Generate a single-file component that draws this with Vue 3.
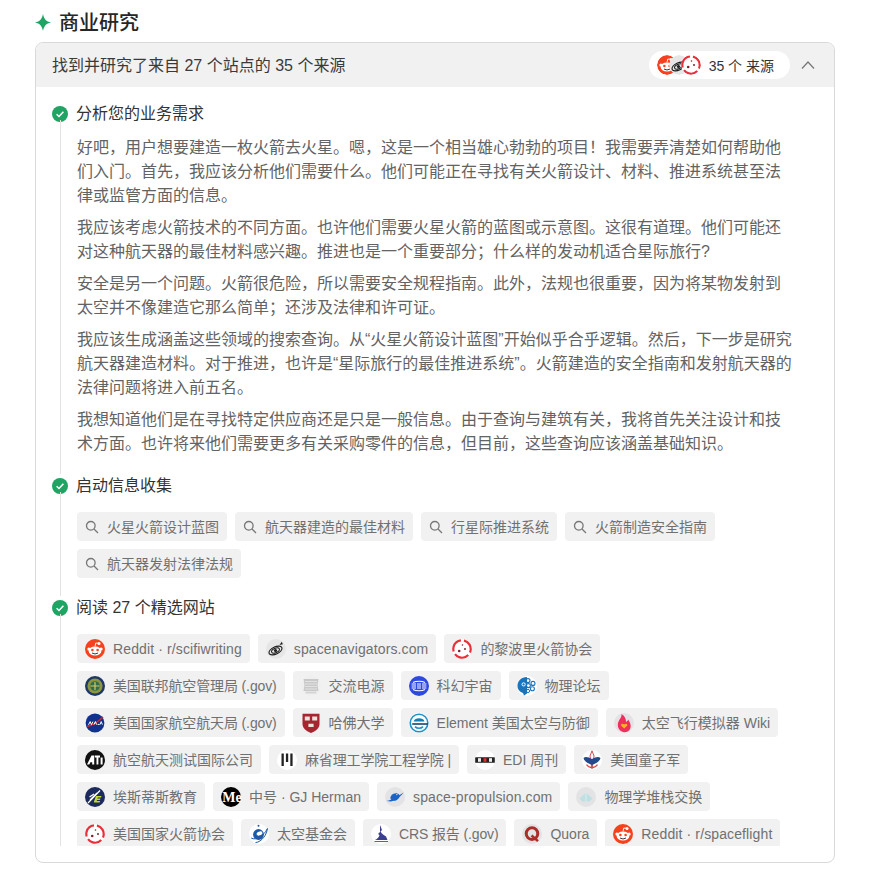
<script setup>
const paragraphs = [
  '好吧，用户想要建造一枚火箭去火星。嗯，这是一个相当雄心勃勃的项目！我需要弄清楚如何帮助他们入门。首先，我应该分析他们需要什么。他们可能正在寻找有关火箭设计、材料、推进系统甚至法律或监管方面的信息。',
  '我应该考虑火箭技术的不同方面。也许他们需要火星火箭的蓝图或示意图。这很有道理。他们可能还对这种航天器的最佳材料感兴趣。推进也是一个重要部分；什么样的发动机适合星际旅行?',
  '安全是另一个问题。火箭很危险，所以需要安全规程指南。此外，法规也很重要，因为将某物发射到太空并不像建造它那么简单；还涉及法律和许可证。',
  '我应该生成涵盖这些领域的搜索查询。从“火星火箭设计蓝图”开始似乎合乎逻辑。然后，下一步是研究航天器建造材料。对于推进，也许是“星际旅行的最佳推进系统”。火箭建造的安全指南和发射航天器的法律问题将进入前五名。',
  '我想知道他们是在寻找特定供应商还是只是一般信息。由于查询与建筑有关，我将首先关注设计和技术方面。也许将来他们需要更多有关采购零件的信息，但目前，这些查询应该涵盖基础知识。'
]

const queries = ['火星火箭设计蓝图', '航天器建造的最佳材料', '行星际推进系统', '火箭制造安全指南', '航天器发射法律法规']

// kind only nudges text width: latin names run a bit wider, ".gov" ones a bit narrower
const sources = [
  { name: 'Reddit · r/scifiwriting', icon: 'reddit', kind: 'latin' },
  { name: 'spacenavigators.com', icon: 'galaxy', kind: 'latin' },
  { name: '的黎波里火箭协会', icon: 'tripoli' },
  { name: '美国联邦航空管理局 (.gov)', icon: 'faa', kind: 'gov' },
  { name: '交流电源', icon: 'ac' },
  { name: '科幻宇宙', icon: 'scifi' },
  { name: '物理论坛', icon: 'physics' },
  { name: '美国国家航空航天局 (.gov)', icon: 'nasa', kind: 'gov' },
  { name: '哈佛大学', icon: 'harvard' },
  { name: 'Element 美国太空与防御', icon: 'element' },
  { name: '太空飞行模拟器 Wiki', icon: 'flame' },
  { name: '航空航天测试国际公司', icon: 'ati' },
  { name: '麻省理工学院工程学院 |', icon: 'mit', kind: 'gov' },
  { name: 'EDI 周刊', icon: 'edi' },
  { name: '美国童子军', icon: 'scouts' },
  { name: '埃斯蒂斯教育', icon: 'estes' },
  { name: '中号 · GJ Herman', icon: 'medium' },
  { name: 'space-propulsion.com', icon: 'propulsion', kind: 'latin' },
  { name: '物理学堆栈交换', icon: 'stack' },
  { name: '美国国家火箭协会', icon: 'tripoli' },
  { name: '太空基金会', icon: 'foundation' },
  { name: 'CRS 报告 (.gov)', icon: 'crs', kind: 'gov' },
  { name: 'Quora', icon: 'quora' },
  { name: 'Reddit · r/spaceflight', icon: 'reddit', kind: 'latin' }
]
</script>

<template>
  <div class="page">
    <h2 class="title">
      <svg class="spark" viewBox="0 0 16 17"><path d="M8 0 C9 5 11 7.5 16 8.5 C11 9.5 9 12 8 17 C7 12 5 9.5 0 8.5 C5 7.5 7 5 8 0Z" /></svg>
      商业研究
    </h2>

    <div class="card">
      <div class="card-head">
        <span class="head-text">找到并研究了来自 27 个站点的 35 个来源</span>
        <div class="count-pill">
          <div class="stack">
            <svg class="stack-icon" viewBox="0 0 20 20"><use href="#i-reddit" /></svg>
            <svg class="stack-icon" viewBox="0 0 20 20"><use href="#i-galaxy" /></svg>
            <svg class="stack-icon" viewBox="0 0 20 20"><use href="#i-tripoli" /></svg>
          </div>
          <span>35 个 来源</span>
        </div>
        <svg class="chevron" viewBox="0 0 16 16"><path d="M2 11.5 L8 5 L14 11.5" /></svg>
      </div>

      <div class="card-body">
        <div class="step">
          <div class="step-title"><span class="check"><svg viewBox="0 0 16 16"><path d="M4.6 8.2 L7 10.5 L11.4 5.8" /></svg></span>分析您的业务需求</div>
          <div class="step-content thoughts">
            <p v-for="p in paragraphs" :key="p">{{ p }}</p>
          </div>
        </div>

        <div class="step">
          <div class="step-title"><span class="check"><svg viewBox="0 0 16 16"><path d="M4.6 8.2 L7 10.5 L11.4 5.8" /></svg></span>启动信息收集</div>
          <div class="step-content chips">
            <div v-for="q in queries" :key="q" class="chip">
              <svg class="search" viewBox="0 0 14 14"><circle cx="5.8" cy="5.8" r="4.3" /><path d="M9 9 L13 13" /></svg>
              {{ q }}
            </div>
          </div>
        </div>

        <div class="step">
          <div class="step-title"><span class="check"><svg viewBox="0 0 16 16"><path d="M4.6 8.2 L7 10.5 L11.4 5.8" /></svg></span>阅读 27 个精选网站</div>
          <div class="step-content chips">
            <div v-for="s in sources" :key="s.name" class="chip" :class="s.kind">
              <svg class="favicon" viewBox="0 0 20 20"><use :href="'#i-' + s.icon" /></svg>
              {{ s.name }}
            </div>
          </div>
        </div>
      </div>
    </div>

    <svg class="defs" width="0" height="0">
      <defs>
        <symbol id="i-reddit" viewBox="0 0 20 20">
          <circle cx="10" cy="10" r="10" fill="#f5421c" />
          <ellipse cx="10" cy="12" rx="6.4" ry="4.6" fill="#fff" />
          <circle cx="3.9" cy="10" r="1.6" fill="#fff" />
          <circle cx="16.1" cy="10" r="1.6" fill="#fff" />
          <circle cx="14" cy="4.4" r="1.5" fill="#fff" />
          <path d="M10 7.5 L10.8 4 L14 4.4" fill="none" stroke="#fff" stroke-width=".9" />
          <circle cx="7.4" cy="11" r="1.3" fill="#f5421c" />
          <circle cx="12.6" cy="11" r="1.3" fill="#f5421c" />
          <path d="M7 14 Q10 16 13 14" fill="none" stroke="#222" stroke-width=".9" />
        </symbol>
        <symbol id="i-galaxy" viewBox="0 0 20 20">
          <circle cx="10" cy="10" r="10" fill="#e6e6e6" />
          <ellipse cx="9.5" cy="11.5" rx="7" ry="3.6" fill="none" stroke="#1c1c1c" stroke-width="1.1" transform="rotate(-25 9.5 11.5)" />
          <ellipse cx="9.5" cy="11.5" rx="4.2" ry="2.2" fill="none" stroke="#1c1c1c" stroke-width="1" transform="rotate(-25 9.5 11.5)" />
          <circle cx="9.5" cy="11.5" r="1.6" fill="#1c1c1c" />
          <path d="M13.5 6 L15.8 2.8 L16.8 5.2Z" fill="#1c1c1c" />
        </symbol>
        <symbol id="i-tripoli" viewBox="0 0 20 20">
          <circle cx="10" cy="10" r="10" fill="#fff" />
          <circle cx="10" cy="10" r="8.7" fill="none" stroke="#e8303a" stroke-width="2.2" stroke-dasharray="15 3" transform="rotate(-75 10 10)" />
          <circle cx="7.2" cy="12" r="1.3" fill="#7c2430" />
          <circle cx="13" cy="10" r="1" fill="#7c2430" />
          <circle cx="10.5" cy="6" r=".8" fill="#7c2430" />
        </symbol>
        <symbol id="i-faa" viewBox="0 0 20 20">
          <circle cx="10" cy="10" r="10" fill="#1d3766" />
          <circle cx="10" cy="10" r="7.6" fill="#8f9440" />
          <circle cx="10" cy="10" r="4.8" fill="#2f6d4e" />
          <path d="M5.5 10 H14.5 M10 6 V14" stroke="#d8c964" stroke-width="1.2" />
        </symbol>
        <symbol id="i-ac" viewBox="0 0 20 20">
          <circle cx="10" cy="10" r="10" fill="#efefef" />
          <path d="M2.5 3 H17.5 L16.5 9 L17.5 15 H2.5 L3.5 9Z" fill="#c9c9c9" />
          <path d="M4 5.5 H16 M4 8 H16 M4 10.5 H16 M4 13 H16" stroke="#e2e2e2" stroke-width="1" />
          <path d="M4.5 15.5 H15.5 V17.5 H4.5Z" fill="#d4d4d4" />
        </symbol>
        <symbol id="i-scifi" viewBox="0 0 20 20">
          <circle cx="10" cy="10" r="10" fill="#2d49e0" />
          <path d="M2.6 8 H7 M2.6 10 H7 M2.6 12 H7 M8 8 H12 M8 10 H12 M8 12 H12 M13 8 H17.4 M13 10 H17.4 M13 12 H17.4" stroke="#fff" stroke-width="1" />
          <path d="M4 6.5 C7 4.8 13 4.8 16 6.5 M4 13.5 C7 15.2 13 15.2 16 13.5" fill="none" stroke="#fff" stroke-width="1.1" />
        </symbol>
        <symbol id="i-physics" viewBox="0 0 20 20">
          <circle cx="10" cy="10" r="10" fill="#fff" />
          <path d="M10 1 C4 1 .5 5 .5 10 C.5 13.5 3 16.2 6 17 L7 19.5 L10 17.5Z" fill="#1b74ba" />
          <circle cx="11" cy="4.6" r="2" fill="none" stroke="#1b74ba" stroke-width="1.1" />
          <circle cx="16" cy="7.4" r="2" fill="none" stroke="#1b74ba" stroke-width="1.1" />
          <circle cx="15.4" cy="12.8" r="2" fill="none" stroke="#1b74ba" stroke-width="1.1" />
          <circle cx="11.4" cy="9.6" r="2" fill="none" stroke="#1b74ba" stroke-width="1.1" />
          <circle cx="11" cy="15" r="1.6" fill="none" stroke="#1b74ba" stroke-width="1" />
          <circle cx="6.6" cy="8.4" r="1.6" fill="none" stroke="#fff" stroke-width="1" />
        </symbol>
        <symbol id="i-nasa" viewBox="0 0 20 20">
          <circle cx="10" cy="10" r="9.4" fill="#10328c" />
          <path d="M2 13.5 C7 12.5 13 9 18 4" fill="none" stroke="#d8232a" stroke-width="1.6" />
          <path d="M3.5 11.8 L5.2 8.6 L6.4 11.6 L8 8.6 M9 11.6 L10.4 8.6 L11.6 11.6 M12.6 11.4 H14.6 M15 11.6 L16.2 8.6 L17.4 11.6" fill="none" stroke="#fff" stroke-width="1" />
        </symbol>
        <symbol id="i-harvard" viewBox="0 0 20 20">
          <circle cx="10" cy="10" r="10" fill="#efefef" />
          <path d="M1.5 .8 H18.5 V11 C18.5 15.5 14.5 18 10 20 C5.5 18 1.5 15.5 1.5 11Z" fill="#a5262f" />
          <path d="M3.8 3.4 H8.8 V7.4 H3.8Z M11.2 3.4 H16.2 V7.4 H11.2Z M7.4 10.8 H12.6 V14 H7.4Z" fill="#e9e4de" />
        </symbol>
        <symbol id="i-element" viewBox="0 0 20 20">
          <circle cx="10" cy="10" r="10" fill="#fff" />
          <circle cx="10" cy="10" r="8.8" fill="none" stroke="#1f93c9" stroke-width="1.6" />
          <path d="M4.5 8.6 C5.5 4.4 14.5 4 15.5 8.6Z" fill="#0f7fb4" />
          <path d="M3.2 10.2 H18.8 V11.8 H3.2Z" fill="#14456a" />
          <path d="M6 13.6 C8 15.8 12 15.8 14 13.6" fill="none" stroke="#1f93c9" stroke-width="1.6" />
        </symbol>
        <symbol id="i-flame" viewBox="0 0 20 20">
          <circle cx="10" cy="10" r="10" fill="#e3e3e5" />
          <path d="M7.5 1 C8 5 4 7 3.8 11.8 C3.7 16 7 19.2 10.5 19.2 C14.6 19.2 17 16 16.6 12.2 C16.4 9.8 15 8 14.2 6.6 C13.6 8 13 8.6 12 9 C12.2 6 10.6 2.8 7.5 1Z" fill="#f0305c" />
          <path d="M10.2 15.6 L7.3 12.8 C6.2 11.4 8.4 9.8 10.2 11.6 C12 9.8 14.2 11.4 13.1 12.8Z" fill="#fbb322" />
        </symbol>
        <symbol id="i-ati" viewBox="0 0 20 20">
          <circle cx="10" cy="10" r="10" fill="#111" />
          <path d="M2 14.5 L6.5 5.5 H9.2 V14.5 H7.2 V12.2 H5.4 L4.3 14.5Z" fill="#fff" />
          <path d="M9.8 5.5 H15 V7.5 H13.4 V14.5 H11.5 V7.5 H9.8Z M15.6 7.5 H17.6 V14.5 H15.6Z" fill="#fff" />
        </symbol>
        <symbol id="i-mit" viewBox="0 0 20 20">
          <circle cx="10" cy="10" r="10" fill="#fff" />
          <path d="M4.5 3.5 H6.8 V16 H4.5Z M8.9 3.5 H11.2 V12 H8.9Z M13.3 3.5 H15.6 V16 H13.3Z" fill="#222" />
        </symbol>
        <symbol id="i-edi" viewBox="0 0 20 20">
          <circle cx="10" cy="10" r="10" fill="#fff" />
          <rect x=".2" y="7.2" width="19.6" height="5.6" rx=".6" fill="#222" />
          <rect x="3" y="8.2" width="3" height="3.6" fill="#eee" />
          <rect x="8.5" y="8.2" width="3" height="3.6" fill="#e02b2b" />
          <rect x="14" y="8.2" width="3" height="3.6" fill="#eee" />
        </symbol>
        <symbol id="i-scouts" viewBox="0 0 20 20">
          <circle cx="10" cy="10" r="10" fill="#fff" />
          <path d="M10 .8 L12 6 L10 18.8 L8 6Z" fill="none" stroke="#d84a4a" stroke-width="1" />
          <path d="M1.5 8 C3.5 6 7 7.5 10 9 C13 7.5 16.5 6 18.5 8 C18 11 15 13 10 15 C5 13 2 11 1.5 8Z" fill="#254a8c" />
          <path d="M4.5 14.6 C7 18.4 13 18.4 15.5 14.6" fill="none" stroke="#d84a4a" stroke-width="1.2" />
        </symbol>
        <symbol id="i-estes" viewBox="0 0 20 20">
          <circle cx="10" cy="10" r="10" fill="#1d2a5e" />
          <path d="M3 16 L15 3.5 M4.5 10 L9 7 M5 13 L12 6" stroke="#fff" stroke-width="1.2" fill="none" />
          <path d="M9 14.5 L11 9 H16.5 L16 10.6 H12.8 L12.4 11.6 H15.4 L15 13 H12 L11.7 14 H15 L14.6 15.4 H9Z" fill="#c4d63b" />
        </symbol>
        <symbol id="i-medium" viewBox="0 0 20 20">
          <circle cx="10" cy="10" r="10" fill="#000" />
          <text x="1.2" y="15" font-family="Liberation Serif, serif" font-size="14" font-weight="700" fill="#fff">Me</text>
        </symbol>
        <symbol id="i-propulsion" viewBox="0 0 20 20">
          <circle cx="10" cy="10" r="10" fill="#e3e3e5" />
          <ellipse cx="10" cy="10" rx="4.8" ry="3.6" fill="#1a63c4" transform="rotate(-25 10 10)" />
          <path d="M1.5 14 C7 13 14 8.5 18.5 5.5 C16.5 8.5 12 12.5 6 14.5Z" fill="#1a63c4" />
          <path d="M11 8 L14 6" stroke="#e3e3e5" stroke-width=".9" />
        </symbol>
        <symbol id="i-stack" viewBox="0 0 20 20">
          <circle cx="10" cy="10" r="10" fill="#e3e3e5" />
          <path d="M3.5 11.5 L10 5.5 L16.5 11.5 L13.5 14.5 H6.5Z" fill="#bfe0e2" />
          <path d="M10 5.5 V14.5" stroke="#e3f2f2" stroke-width=".8" />
        </symbol>
        <symbol id="i-foundation" viewBox="0 0 20 20">
          <circle cx="10" cy="10" r="10" fill="#fff" />
          <circle cx="9.5" cy="10.5" r="5.4" fill="#1f5aa8" />
          <ellipse cx="10.5" cy="9.5" rx="3" ry="1.9" fill="#fff" transform="rotate(-20 10.5 9.5)" />
          <path d="M2.2 14 C7 17 15 12 18.4 4.5 C18 10 13 18 6.5 18.6" fill="none" stroke="#1f5aa8" stroke-width="1" />
          <circle cx="9.5" cy="1.8" r="1" fill="#1f5aa8" />
        </symbol>
        <symbol id="i-crs" viewBox="0 0 20 20">
          <circle cx="10" cy="10" r="10" fill="#fff" />
          <path d="M9 1 L11 6 L9.5 7.5 C11 10 13 11 15 12.5 L16.5 16 H4 C6 15 8 13.5 8.5 11 L7 10 L9 8Z" fill="#3d3f8f" />
          <path d="M3.5 17 H17 V18 H3.5Z" fill="#5b5ea8" />
        </symbol>
        <symbol id="i-quora" viewBox="0 0 20 20">
          <circle cx="10" cy="10" r="10" fill="#e3e3e5" />
          <circle cx="10" cy="9.6" r="5.8" fill="none" stroke="#a92d28" stroke-width="3" />
          <path d="M9.5 11.5 L16 17.2" stroke="#a92d28" stroke-width="2.4" />
        </symbol>
      </defs>
    </svg>
  </div>
</template>

<style>
html, body {
  margin: 0;
  background: #fff;
}
</style>

<style scoped>
.page {
  width: 869px;
  height: 878px;
  padding: 12px 34px 0 35px;
  box-sizing: border-box;
  font-family: "Liberation Sans", "Noto Sans CJK SC", sans-serif;
  color: #333;
  overflow: hidden;
}

.title {
  display: flex;
  align-items: center;
  gap: 8px;
  margin: 0 0 8px;
  font-size: 20px;
  line-height: 22px;
  font-weight: 500;
  color: #262626;
}

.spark {
  width: 16px;
  height: 17px;
  margin-top: -1px;
  fill: #1fa463;
}

.card {
  border: 1px solid #d9d9d9;
  border-radius: 8px;
  overflow: hidden;
  height: 821px;
  box-sizing: border-box;
  background: #fff;
}

.card-head {
  display: flex;
  align-items: center;
  height: 44px;
  padding: 0 16px;
  background: #f1f1f1;
  font-size: 16px;
}

.head-text {
  flex: 1;
  margin-top: -2px;
  color: #3a3a3a;
}

.count-pill {
  display: flex;
  align-items: center;
  gap: 8px;
  height: 28px;
  padding: 0 16px 0 8px;
  border-radius: 14px;
  background: #fff;
  font-size: 14px;
  color: #333;
}

.stack {
  display: flex;
}

.stack-icon {
  width: 20px;
  height: 20px;
  margin-left: -8px;
  border-radius: 50%;
}

.stack-icon:first-child {
  margin-left: 0;
}

.chevron {
  width: 16px;
  height: 16px;
  margin: 0 2px 0 10px;
  fill: none;
  stroke: #777;
  stroke-width: 1.2;
}

.card-body {
  height: 744px;
  margin-top: 15px;
  padding: 0 16px;
  overflow: hidden;
}

.step {
  position: relative;
  margin-bottom: 18px;
}

.step::before {
  content: "";
  position: absolute;
  left: 8px;
  top: 18px;
  bottom: -18px;
  width: 1px;
  background: #e3e3e3;
}

.step-title {
  display: flex;
  align-items: center;
  gap: 8px;
  height: 24px;
  font-size: 16px;
  line-height: 24px;
  color: #333;
}

.check {
  display: flex;
  width: 16px;
  height: 16px;
  border-radius: 50%;
  background: #1fa463;
}

.check svg {
  width: 16px;
  height: 16px;
  fill: none;
  stroke: #fff;
  stroke-width: 1.5;
}

.step-content {
  margin: 10px 0 0 25px;
}

.thoughts {
  color: #636363;
  font-size: 16px;
  line-height: 24px;
  width: 719px;
}

.thoughts p {
  margin: 0 0 8px;
}

.thoughts p:last-child {
  margin: 0;
}

.chips {
  display: flex;
  flex-wrap: wrap;
  gap: 8px;
  margin-top: 14px;
  width: 712px;
}

.chip {
  display: flex;
  align-items: center;
  gap: 8px;
  height: 29px;
  padding: 0 8px;
  border-radius: 4px;
  background: #f1f1f1;
  font-size: 14px;
  line-height: 20px;
  color: #707070;
  white-space: nowrap;
}

.latin {
  letter-spacing: .12px;
}

.gov {
  letter-spacing: -.13px;
}

.search {
  width: 14px;
  height: 14px;
  fill: none;
  stroke: #777;
  stroke-width: 1.3;
}

.favicon {
  width: 20px;
  height: 20px;
}

.defs {
  position: absolute;
}
</style>
